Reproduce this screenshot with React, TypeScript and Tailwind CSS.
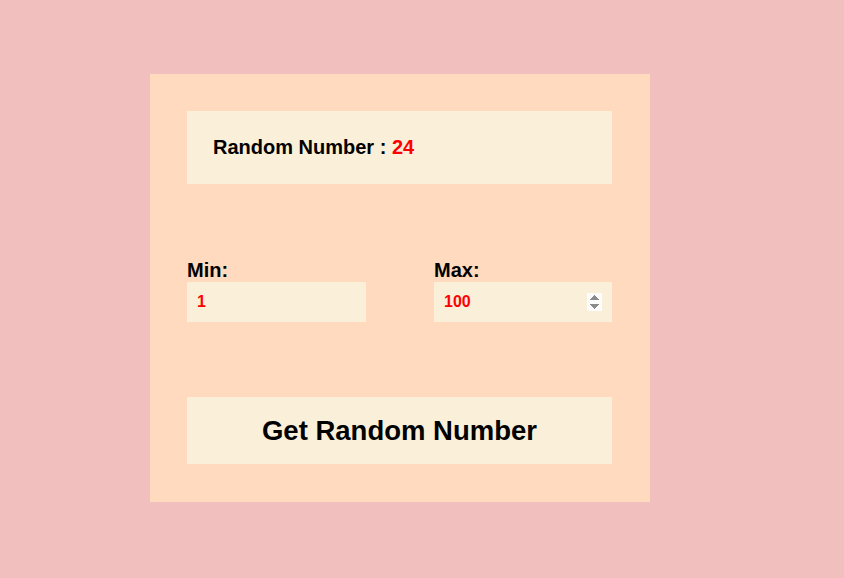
import { useState } from "react";

export default function App() {
  const [min, setMin] = useState("1");
  const [max, setMax] = useState("100");
  const [num, setNum] = useState(24);

  const roll = () => {
    const lo = parseInt(min) || 0;
    const hi = parseInt(max) || 0;
    setNum(Math.floor(Math.random() * (hi - lo + 1)) + lo);
  };

  return (
    <div
      className="min-h-screen w-full bg-[#f2bfbf] flex items-start pt-[74px] pl-[150px]"
      style={{ fontFamily: "'Liberation Sans', Arial, sans-serif" }}
    >
      <div className="w-[500px] bg-[#ffdabe] pl-[37px] pr-[38px] pt-[37px] pb-[38px] flex flex-col">
        <div className="h-[73px] bg-[#faefd9] flex items-center px-[26px] pb-[2px] text-[20px] font-bold text-black">
          Random Number :&nbsp;<span className="text-[#ff0000]">{num}</span>
        </div>

        <div className="mt-[75px] flex justify-between">
          <div className="w-[179px] flex flex-col">
            <label className="text-[20px] font-bold text-black leading-[23px]">Min:</label>
            <input
              type="number"
              value={min}
              onChange={(e) => setMin(e.target.value)}
              className="h-[40px] w-full bg-[#faefd9] px-[10px] text-[16px] font-bold text-[#ff0000] outline-none"
            />
          </div>
          <div className="w-[178px] flex flex-col">
            <label className="text-[20px] font-bold text-black leading-[23px]">Max:</label>
            <input
              type="number"
              autoFocus
              value={max}
              onChange={(e) => setMax(e.target.value)}
              className="h-[40px] w-full bg-[#faefd9] px-[10px] text-[16px] font-bold text-[#ff0000] outline-none"
            />
          </div>
        </div>

        <button
          onClick={roll}
          className="mt-[75px] h-[67px] w-full bg-[#faefd9] text-[27.5px] font-bold text-black"
        >
          Get Random Number
        </button>
      </div>
    </div>
  );
}
